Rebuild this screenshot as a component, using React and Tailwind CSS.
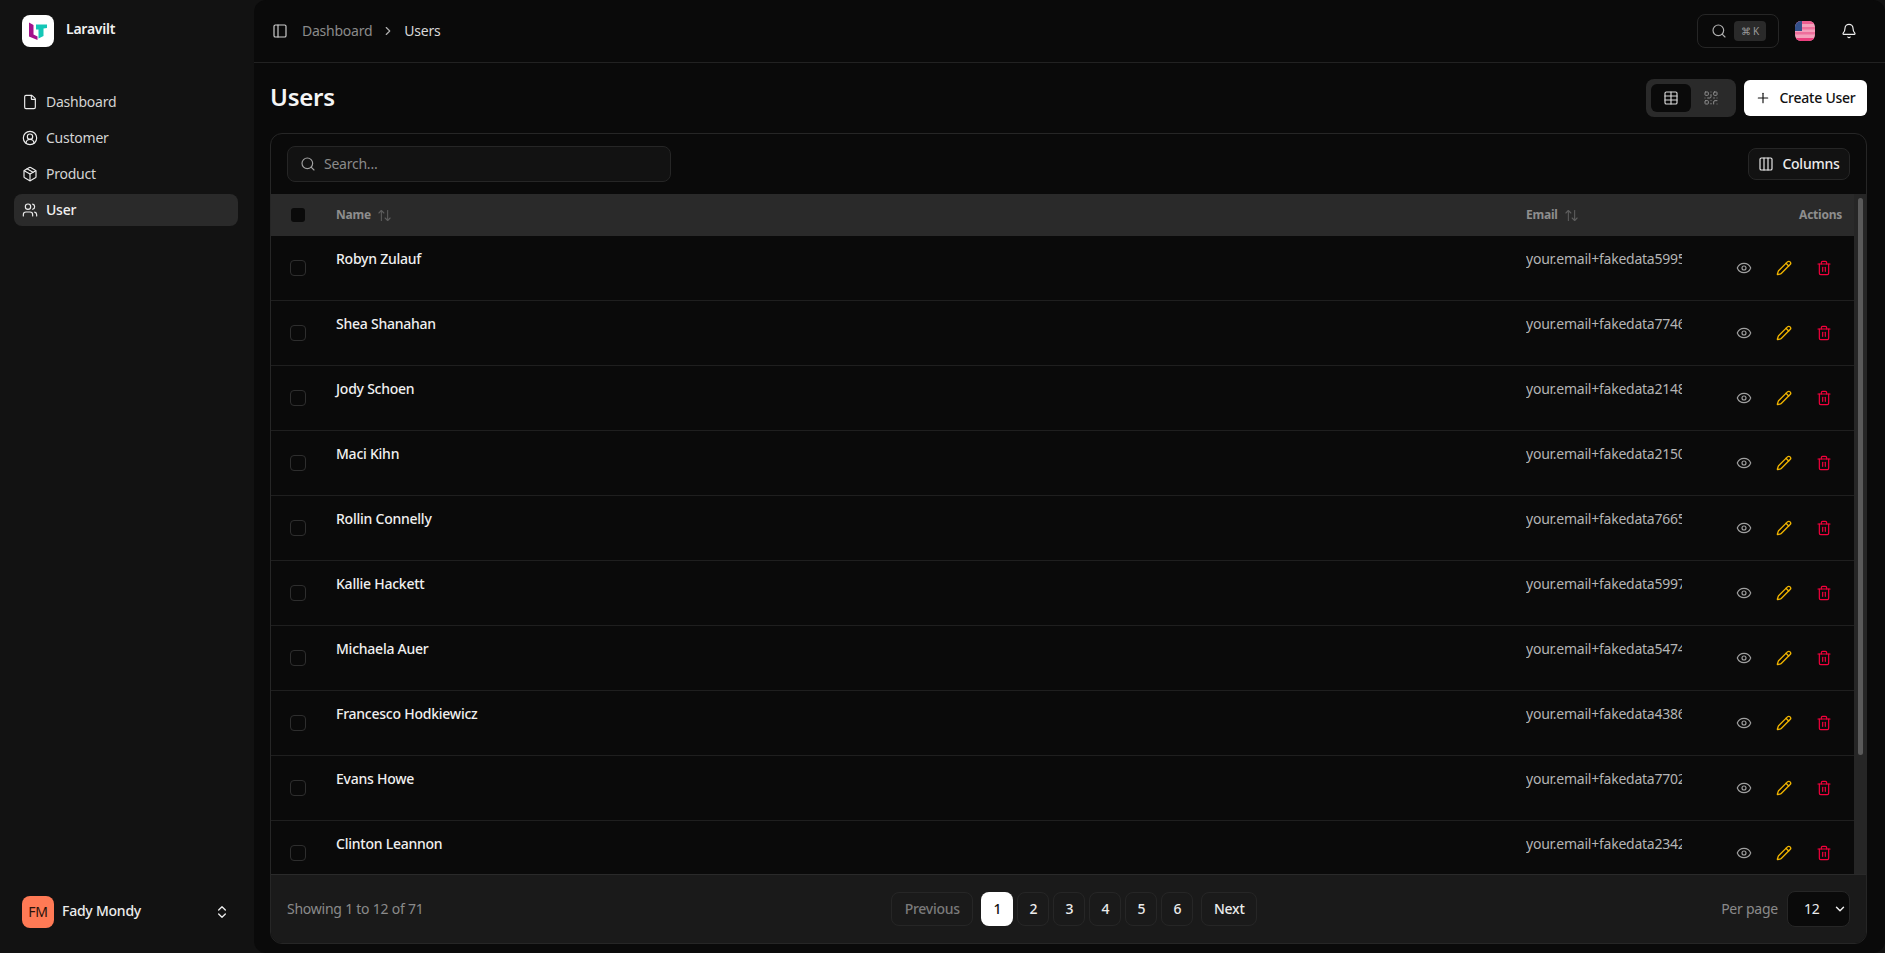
import React from "react";
import { File, CircleUserRound, Package, Users, PanelLeft, ChevronRight, Search, Bell, Plus, Table, QrCode, Columns3, ArrowUpDown, Eye, Pencil, Trash2, ChevronsUpDown, ChevronDown } from "lucide-react";

const nav = [
  { label: "Dashboard", icon: File },
  { label: "Customer", icon: CircleUserRound },
  { label: "Product", icon: Package },
  { label: "User", icon: Users, active: true },
];

const rows = [
  ["Robyn Zulauf", "your.email+fakedata59958@gmail.com"],
  ["Shea Shanahan", "your.email+fakedata77460@gmail.com"],
  ["Jody Schoen", "your.email+fakedata21483@gmail.com"],
  ["Maci Kihn", "your.email+fakedata21506@gmail.com"],
  ["Rollin Connelly", "your.email+fakedata76659@gmail.com"],
  ["Kallie Hackett", "your.email+fakedata59971@gmail.com"],
  ["Michaela Auer", "your.email+fakedata54744@gmail.com"],
  ["Francesco Hodkiewicz", "your.email+fakedata43860@gmail.com"],
  ["Evans Howe", "your.email+fakedata77022@gmail.com"],
  ["Clinton Leannon", "your.email+fakedata23427@gmail.com"],
  ["Dana Runte", "your.email+fakedata61205@gmail.com"],
  ["Ollie Brekke", "your.email+fakedata18334@gmail.com"],
];

function Logo() {
  return (
    <div className="flex h-8 w-8 shrink-0 items-center justify-center rounded-lg bg-white">
      <svg width="20" height="20" viewBox="0 0 20 20">
        <path d="M1 1.500 L5.500 4 V13.500 L9.500 15.500 V19 L1 15.500 Z" fill="#a3128c" />
        <path d="M8 3.500 H19 V7 L15.500 7.600 V15 L10.500 17.500 V8.500 L8 8.500 Z" fill="#14c7b7" />
      </svg>
    </div>
  );
}

function Flag() {
  return (
    <svg width="20" height="20" viewBox="0 0 20 20" className="rounded-md">
      <rect width="20" height="20" fill="#f4a0bb" />
      <rect y="0" width="20" height="3" fill="#ee5f92" />
      <rect y="6" width="20" height="2.500" fill="#ee6f9c" />
      <rect y="11" width="20" height="2.500" fill="#ee6f9c" />
      <rect y="17" width="20" height="3" fill="#ec3f7e" />
      <rect width="7" height="10" fill="#33508a" />
    </svg>
  );
}

function Sidebar() {
  return (
    <aside className="flex w-[254px] shrink-0 flex-col justify-between bg-[#121212] pb-[25px]">
      <div>
        <div className="flex items-start gap-3 px-[22px] pt-[15px]">
          <Logo />
          <span className="pt-[4px] text-sm leading-5 font-semibold text-[#f0f0f0]">Laravilt</span>
        </div>
        <nav className="mt-[39px] flex flex-col gap-1 pr-4 pl-[14px]">
          {nav.map(({ label, icon: Icon, active }) => (
            <div key={label} className={`flex h-8 items-center gap-2 rounded-lg px-2 text-sm ${active ? "bg-[#2a2a2a] font-medium text-[#f0f0f0]" : "text-[#d4d4d4]"}`}>
              <Icon size={16} strokeWidth={1.75} className="text-[#ececec]" />
              <span>{label}</span>
            </div>
          ))}
        </nav>
      </div>
      <div className="flex items-center gap-2 pr-[24px] pl-[22px]">
        <div className="flex h-8 w-8 items-center justify-center rounded-lg bg-[#ff7a55] text-sm text-[#2a120a]">FM</div>
        <span className="flex-1 pb-[2px] text-sm font-medium text-[#ececec]">Fady Mondy</span>
        <ChevronsUpDown size={16} className="text-[#ececec]" />
      </div>
    </aside>
  );
}

function Header() {
  return (
    <header className="flex h-[63px] shrink-0 items-center justify-between border-b border-[#222222] pr-[28px]">
      <div className="flex items-center pl-[18px] text-sm">
        <PanelLeft size={16} strokeWidth={1.75} className="text-[#cfcfcf]" />
        <span className="ml-[14px] text-[#8a8a8a]">Dashboard</span>
        <ChevronRight size={14} className="mx-[9px] text-[#b0b0b0]" />
        <span className="text-[#d8d8d8]">Users</span>
      </div>
      <div className="flex items-center">
        <div className="flex h-[34px] w-[82px] items-center gap-[7px] rounded-lg border border-[#262626] pl-[13px]">
          <Search size={16} strokeWidth={1.75} className="text-[#b0b0b0]" />
          <span className="flex h-5 w-8 items-center justify-center rounded bg-[#2a2a2a] text-[10px] text-[#9a9a9a]">⌘ K</span>
        </div>
        <div className="ml-4 flex h-5 w-5 items-center justify-center"><Flag /></div>
        <Bell size={16} strokeWidth={1.75} className="ml-[26px] text-[#f0f0f0]" />
      </div>
    </header>
  );
}

function Toolbar() {
  return (
    <div className="flex h-[60px] shrink-0 items-center justify-between pr-[16px] pl-[16px]">
      <div className="flex h-9 w-[384px] items-center gap-2 rounded-lg border border-[#262626] bg-[#121212] pl-3 text-sm text-[#8a8a8a]">
        <Search size={16} strokeWidth={1.75} className="text-[#a0a0a0]" />
        <span>Search...</span>
      </div>
      <button className="flex h-8 w-[102px] items-center justify-center gap-2 rounded-lg border border-[#262626] bg-[#121212] text-sm font-medium text-[#ececec]">
        <Columns3 size={16} strokeWidth={1.75} />
        Columns
      </button>
    </div>
  );
}

function DataTable() {
  return (
    <div className="flex min-h-0 flex-1">
      <div className="min-w-0 flex-1 overflow-hidden">
        <table className="w-full table-fixed border-separate border-spacing-0 text-sm">
          <colgroup>
            <col className="w-[49px]" />
            <col />
            <col className="w-[188px]" />
            <col className="w-[156px]" />
          </colgroup>
          <thead>
            <tr className="h-[42px] bg-[#2a2a2a] text-xs font-semibold text-[#8e8e8e]">
              <th className="pl-[20px] text-left align-middle">
                <div className="h-[14px] w-[14px] rounded-[3px] bg-[#0a0a0a]" />
              </th>
              <th className="px-4 text-left align-middle">
                <div className="flex items-center gap-[6px]">Name <ArrowUpDown size={15} strokeWidth={1.75} className="text-[#5c5c5c]" /></div>
              </th>
              <th className="px-4 text-left align-middle">
                <div className="flex items-center gap-[6px]">Email <ArrowUpDown size={15} strokeWidth={1.75} className="text-[#5c5c5c]" /></div>
              </th>
              <th className="pr-3 text-right align-middle">Actions</th>
            </tr>
          </thead>
          <tbody>
            {rows.map(([name, email]) => (
              <tr key={name} className="h-[65px]">
                <td className="border-b border-[#1f1f1f] pl-[19px] align-middle">
                  <div className="h-4 w-4 rounded-[4px] border border-[#2e2e2e]" />
                </td>
                <td className="border-b border-[#1f1f1f] px-4 pt-[13px] align-top font-medium text-[#f0f0f0]">{name}</td>
                <td className="border-b border-[#1f1f1f] px-4 pt-[13px] align-top text-[#b4b4b4]">
                  <div className="overflow-hidden whitespace-nowrap">{email}</div>
                </td>
                <td className="border-b border-[#1f1f1f] align-middle">
                  <div className="flex items-center justify-end gap-6 pr-[22px]">
                    <Eye size={16} strokeWidth={1.75} className="text-[#a0a0a0]" />
                    <Pencil size={16} strokeWidth={2} className="text-[#f0b400]" />
                    <Trash2 size={16} strokeWidth={1.75} className="text-[#f5003c]" />
                  </div>
                </td>
              </tr>
            ))}
          </tbody>
        </table>
      </div>
      <div className="w-3 shrink-0 bg-[#262626] pt-[4px] pr-[3px] pl-[4px]">
        <div className="h-[557px] rounded-full bg-[#5a5a5a]" />
      </div>
    </div>
  );
}

function Footer() {
  const base = "flex h-[34px] items-center justify-center rounded-lg border border-[#262626] text-sm font-medium";
  return (
    <div className="flex h-[69px] shrink-0 items-center justify-between border-t border-[#2a2a2a] bg-[#1a1a1a] px-4">
      <span className="text-sm text-[#8a8a8a]">Showing 1 to 12 of 71</span>
      <div className="ml-[4px] flex items-center">
        <div className={`${base} mr-2 w-[82px] text-[#7a7a7a]`}>Previous</div>
        <div className="flex gap-1">
          <div className="flex h-[34px] w-8 items-center justify-center rounded-lg bg-white text-sm font-medium text-[#111111]">1</div>
          {[2, 3, 4, 5, 6].map((n) => (
            <div key={n} className={`${base} w-8 text-[#ececec]`}>{n}</div>
          ))}
        </div>
        <div className={`${base} ml-2 w-[56px] text-[#ececec]`}>Next</div>
      </div>
      <div className="flex items-center gap-[9px]">
        <span className="text-sm text-[#8a8a8a]">Per page</span>
        <div className="flex h-9 w-[63px] items-center justify-between rounded-lg border border-[#262626] bg-[#0a0a0a] pr-[2px] pl-4 text-sm text-[#ececec]">
          12
          <ChevronDown size={14} strokeWidth={2.5} />
        </div>
      </div>
    </div>
  );
}

export default function App() {
  return (
    <div className="flex h-screen w-full overflow-hidden bg-[#121212] font-['Noto_Sans',sans-serif] tracking-[-0.015em]">
      <Sidebar />
      <main className="flex min-w-0 flex-1 flex-col rounded-xl bg-[#0a0a0a]">
        <Header />
        <div className="flex min-h-0 flex-1 flex-col pr-[18px] pb-[9px] pl-4">
          <div className="flex h-[70px] shrink-0 items-center justify-between pb-[3px]">
            <h1 className="text-2xl font-semibold text-[#f5f5f5]">Users</h1>
            <div className="mt-[2px] flex items-center gap-2">
              <div className="flex h-[38px] w-[90px] items-center rounded-lg bg-[#2a2a2a] px-[5px]">
                <div className="flex h-7 w-10 items-center justify-center rounded-md bg-[#0a0a0a]">
                  <Table size={16} strokeWidth={1.75} className="text-[#d8d8d8]" />
                </div>
                <div className="flex h-7 w-10 items-center justify-center">
                  <QrCode size={16} strokeWidth={1.5} className="text-[#8e8e8e]" />
                </div>
              </div>
              <button className="flex h-9 w-[123px] items-center justify-center gap-2 rounded-md bg-white text-sm font-medium text-[#111111]">
                <Plus size={16} strokeWidth={1.75} />
                Create User
              </button>
            </div>
          </div>
          <div className="flex min-h-0 flex-1 flex-col overflow-hidden rounded-xl border border-[#262626]">
            <Toolbar />
            <DataTable />
            <Footer />
          </div>
        </div>
      </main>
    </div>
  );
}
